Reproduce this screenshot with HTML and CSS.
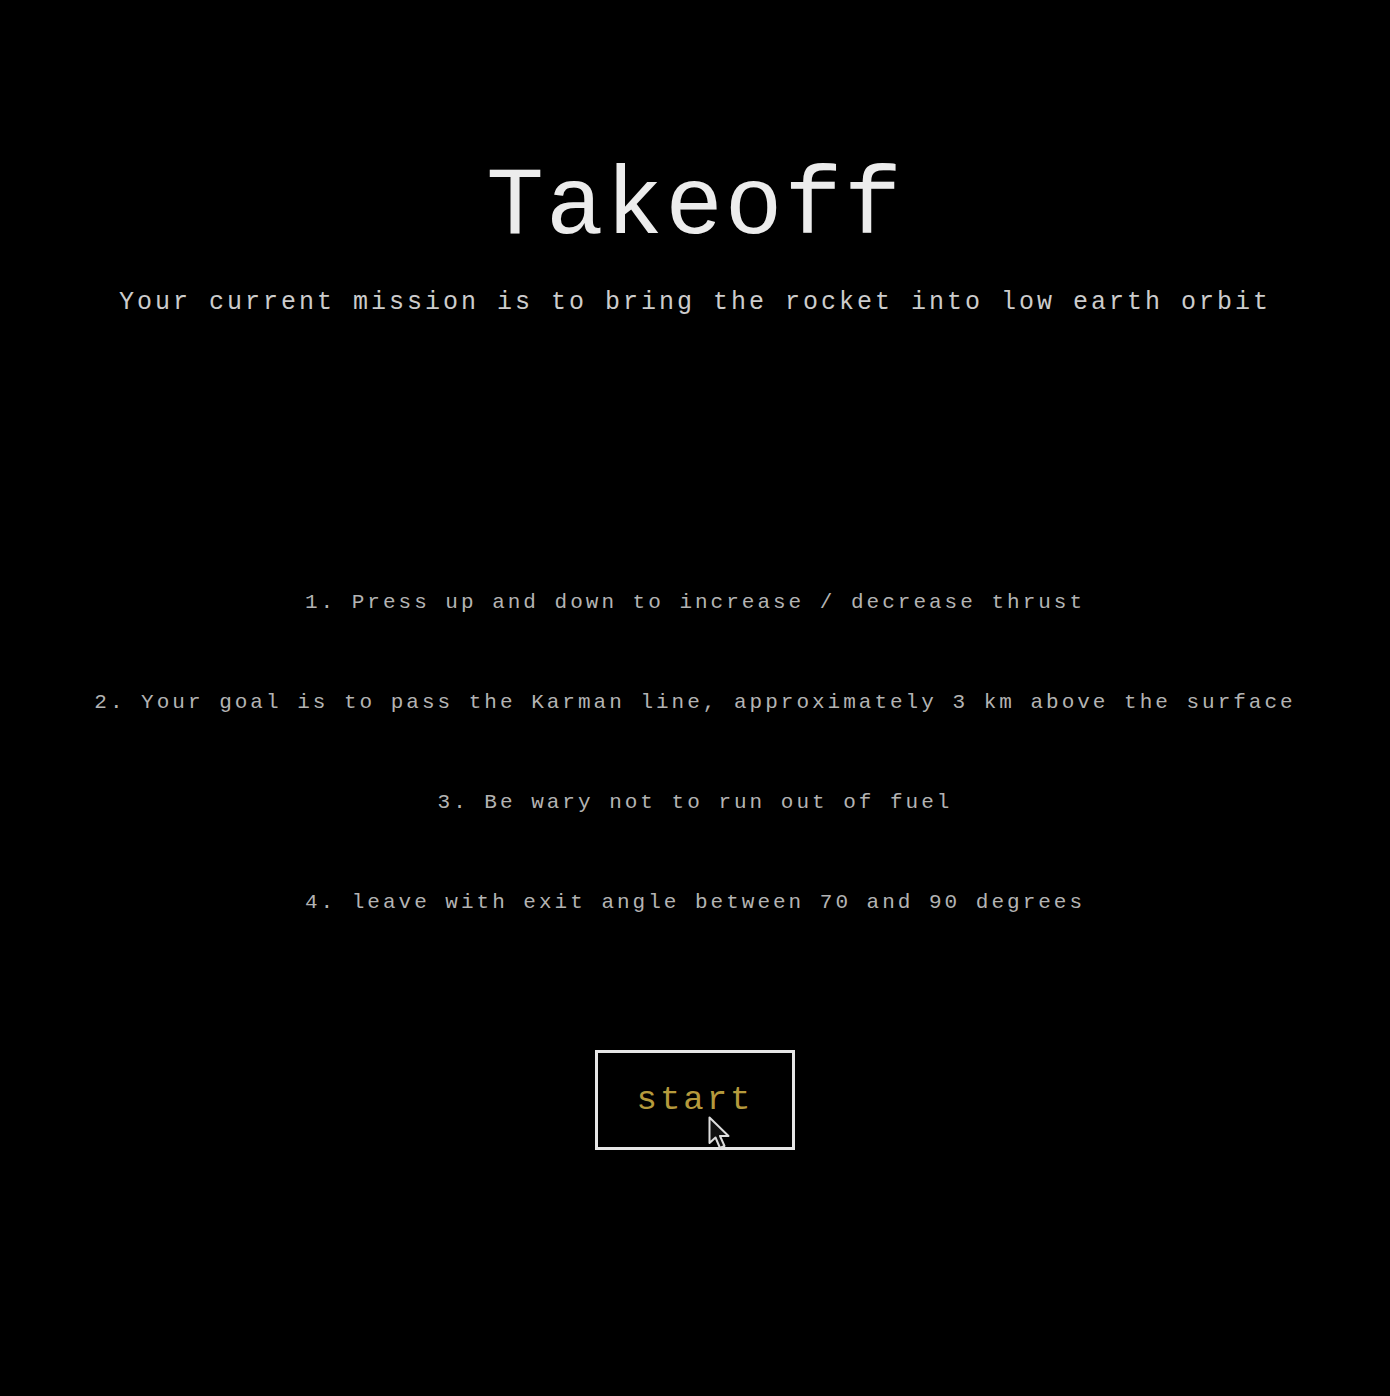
FILE: index.html
```html
<!DOCTYPE html>
<html>
<head>
<meta charset="utf-8">
<link rel="stylesheet" href="styles.css">
</head>
<body>
<main class="screen">
  <h1 class="title">Takeoff</h1>
  <p class="mission">Your current mission is to bring the rocket into low earth orbit</p>
  <ol class="rules">
    <li>1. Press up and down to increase / decrease thrust</li>
    <li>2. Your goal is to pass the Karman line, approximately 3 km above the surface</li>
    <li>3. Be wary not to run out of fuel</li>
    <li>4. leave with exit angle between 70 and 90 degrees</li>
  </ol>
  <button class="start">start
    <svg class="cursor" width="24" height="38" viewBox="0 0 24 38"><path d="M1.5 1.5 L1.5 27 L7.5 21.5 L12 32 L16.5 30 L12 20 L20.5 20 Z" fill="#111" stroke="#ddd" stroke-width="2" stroke-linejoin="round"/></svg>
  </button>
</main>
</body>
</html>
```
FILE: styles.css
```css
html, body {
  margin: 0;
  padding: 0;
  background: #000;
}
.screen {
  display: flex;
  flex-direction: column;
  align-items: center;
  height: 1396px;
  font-family: "Liberation Mono", "Courier New", monospace;
}
.title {
  margin: 158px 0 0 0;
  font-size: 96px;
  font-weight: normal;
  line-height: 100px;
  color: #ececec;
  letter-spacing: 2px;
}
.mission {
  margin: 30px 0 0 0;
  font-size: 25px;
  line-height: 30px;
  letter-spacing: 3px;
  color: #cccccc;
}
.rules {
  list-style: none;
  margin: 272px 0 0 0;
  padding: 0;
  display: flex;
  flex-direction: column;
  align-items: center;
  gap: 74px;
}
.rules li {
  font-size: 21px;
  line-height: 26px;
  letter-spacing: 3px;
  color: #b3b3b3;
}
.start {
  position: relative;
  margin-top: 134px;
  width: 200px;
  height: 100px;
  background: #000;
  border: 3px solid #e6e6e6;
  font-family: inherit;
  font-size: 34px;
  letter-spacing: 3px;
  color: #b59a3c;
  padding: 0;
}
.cursor {
  position: absolute;
  left: 110px;
  top: 63px;
}
```
